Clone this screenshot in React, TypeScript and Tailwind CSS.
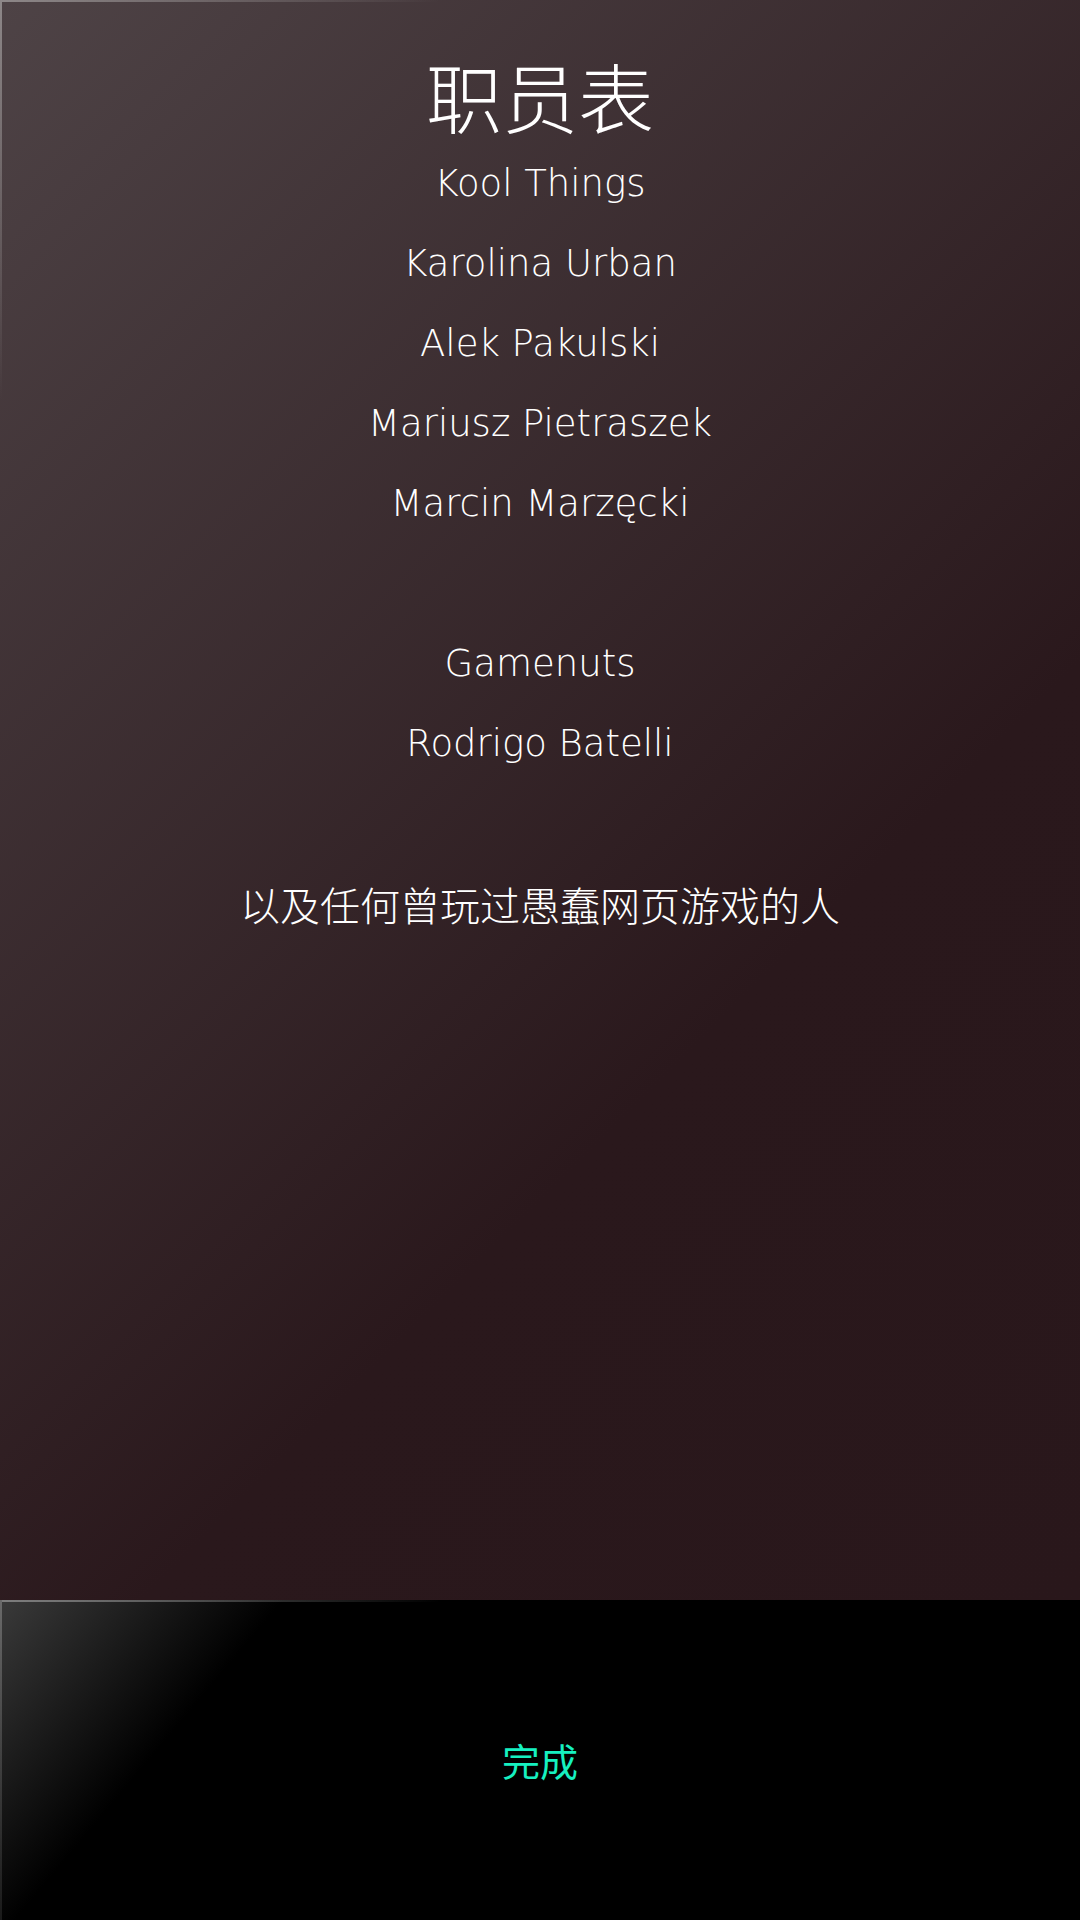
import React from 'react';

const teams = [
  ['Kool Things', 'Karolina Urban', 'Alek Pakulski', 'Mariusz Pietraszek', 'Marcin Marzęcki'],
  ['Gamenuts', 'Rodrigo Batelli'],
];

export default function App() {
  return (
    <div className="w-[1080px] h-[1920px] flex flex-col overflow-hidden">
      {/* Credits */}
      <div className="relative h-[1600px] bg-[linear-gradient(135deg,#4e4346_0%,#2a181c_65%,#29171b_100%)] flex flex-col items-center text-white">
        <div className="absolute top-0 left-0 w-[440px] h-[2px] bg-gradient-to-r from-[#8d8788] to-transparent" />
        <div className="absolute top-0 left-0 w-[2px] h-[400px] bg-gradient-to-b from-[#8d8788] to-transparent" />

        <h1 className="pt-[57px] mb-[11px] text-[76px] leading-[76px] font-light font-['Noto_Sans_CJK_SC',sans-serif]">
          职员表
        </h1>

        <div className="flex flex-col items-center font-['DejaVu_Sans',sans-serif] font-extralight text-[37px] leading-[80px]">
          {teams.map((team, i) => (
            <div key={i} className="flex flex-col items-center mb-[80px]">
              {team.map((name) => (
                <div key={name}>{name}</div>
              ))}
            </div>
          ))}
          <div className="font-['Noto_Sans_CJK_SC',sans-serif] font-light text-[40px] leading-[80px]">
            以及任何曾玩过愚蠢网页游戏的人
          </div>
        </div>
      </div>

      {/* Done */}
      <div className="relative h-[320px] bg-[linear-gradient(130deg,#3a3a3a_0%,#000_21%,#000_100%)] flex items-center justify-center">
        <div className="absolute top-0 left-0 w-[440px] h-[2px] bg-gradient-to-r from-[#7d7d7d] to-transparent" />
        <div className="absolute top-0 left-0 w-[2px] h-[320px] bg-gradient-to-b from-[#6a6a6a] to-[#1a1a1a]" />
        <button className="text-[38px] leading-none font-normal text-[#16f0c0] font-['Noto_Sans_CJK_SC',sans-serif]">
          完成
        </button>
      </div>
    </div>
  );
}
